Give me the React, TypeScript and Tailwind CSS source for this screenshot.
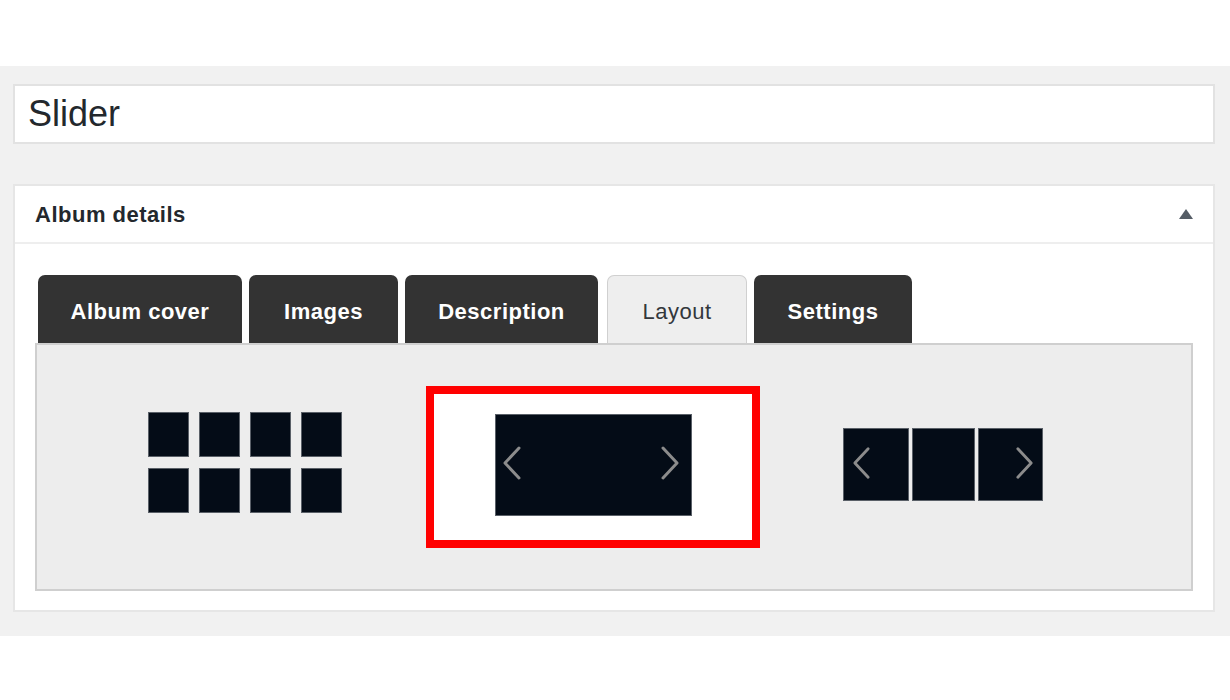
import React from 'react';

const font = { fontFamily: '"Liberation Sans", Arial, sans-serif' };

const Chevron: React.FC<{ dir: 'left' | 'right'; className?: string }> = ({ dir, className }) => (
  <svg className={className} viewBox="0 0 20 34" fill="none" stroke="#8c8c8c" strokeWidth="3" strokeLinecap="round" strokeLinejoin="round">
    {dir === 'left' ? <path d="M17 2 L3 17 L17 32" /> : <path d="M3 2 L17 17 L3 32" />}
  </svg>
);

const tabs = [
  { label: 'Album cover', width: 'w-[204px]', active: false },
  { label: 'Images', width: 'w-[149px]', active: false },
  { label: 'Description', width: 'w-[193px]', active: false },
  { label: 'Layout', width: 'w-[140px]', active: true },
  { label: 'Settings', width: 'w-[158px]', active: false },
];

const GridLayout = () => (
  <div className="grid grid-cols-[41px_41px_41px_41px] gap-x-[10px] gap-y-[11px] w-[195px] mb-[9px]">
    {Array.from({ length: 8 }).map((_, i) => (
      <div key={i} className="h-[45px] bg-[#040c17] border border-[#5a6068]" />
    ))}
  </div>
);

const SliderLayout = () => (
  <div className="w-[334px] h-[162px] border-[8px] border-[#ff0000] bg-white flex items-center justify-center">
    <div className="w-[197px] h-[102px] mb-[4px] bg-[#040c17] border border-[#5a6068] flex items-center justify-between pl-[6px] pr-[11px] pb-[5px]">
      <Chevron dir="left" className="w-[20px] h-[34px]" />
      <Chevron dir="right" className="w-[20px] h-[34px]" />
    </div>
  </div>
);

const CarouselLayout = () => (
  <div className="flex gap-[3px] h-[73px] mb-[6px]">
    <div className="w-[66px] bg-[#040c17] border border-[#5a6068] flex items-center pl-[8px] pb-[2px]">
      <Chevron dir="left" className="w-[19px] h-[34px]" />
    </div>
    <div className="w-[63px] bg-[#040c17] border border-[#5a6068]" />
    <div className="w-[65px] bg-[#040c17] border border-[#5a6068] flex items-center justify-end pr-[8px] pb-[2px]">
      <Chevron dir="right" className="w-[19px] h-[34px]" />
    </div>
  </div>
);

const App: React.FC = () => {
  return (
    <div className="min-h-screen bg-white" style={font}>
      <div className="h-[66px]" />

      <div className="bg-[#f1f1f1] pt-[18px] pb-[24px] pl-[13px] pr-[15px]">
        {/* title */}
        <div className="h-[60px] bg-white border-2 border-[#e2e2e2] flex items-center pl-[13px]">
          <span className="text-[36px] text-[#23282d] leading-none">Slider</span>
        </div>

        {/* album details box */}
        <div className="mt-[40px] bg-white border-2 border-[#e6e6e6]">
          <div className="h-[58px] border-b-2 border-[#eeeeee] flex items-center justify-between pl-[20px] pr-[20px]">
            <span className="text-[22px] font-bold text-[#23282d] tracking-[0.5px]">Album details</span>
            <svg width="14" height="10" viewBox="0 0 14 10"><path d="M7 0 L14 10 L0 10 Z" fill="#555d66" /></svg>
          </div>

          <div className="pt-[31px] pb-[19px] px-[20px]">
            <div className="flex pl-[3px] h-[68px] items-end">
              {tabs.map((t, i) => (
                <div
                  key={t.label}
                  className={
                    (t.active
                      ? 'bg-[#eeeeee] border border-b-0 border-[#d0d0d0] text-[#32373c] font-normal '
                      : 'bg-[#333333] text-white font-bold ') +
                    t.width +
                    ' h-[68px] rounded-t-[7px] flex items-center justify-center pt-[4px] text-[22px] tracking-[0.5px] ' +
                    (i > 0 ? (i === 3 ? 'ml-[9px]' : 'ml-[7px]') : '')
                  }
                >
                  {t.label}
                </div>
              ))}
            </div>

            <div className="h-[248px] bg-[#ededed] border-2 border-[#cfcfcf] flex items-center gap-[83px] pl-[111px]">
              <GridLayout />
              <SliderLayout />
              <CarouselLayout />
            </div>
          </div>
        </div>
      </div>
    </div>
  );
};

export default App;
